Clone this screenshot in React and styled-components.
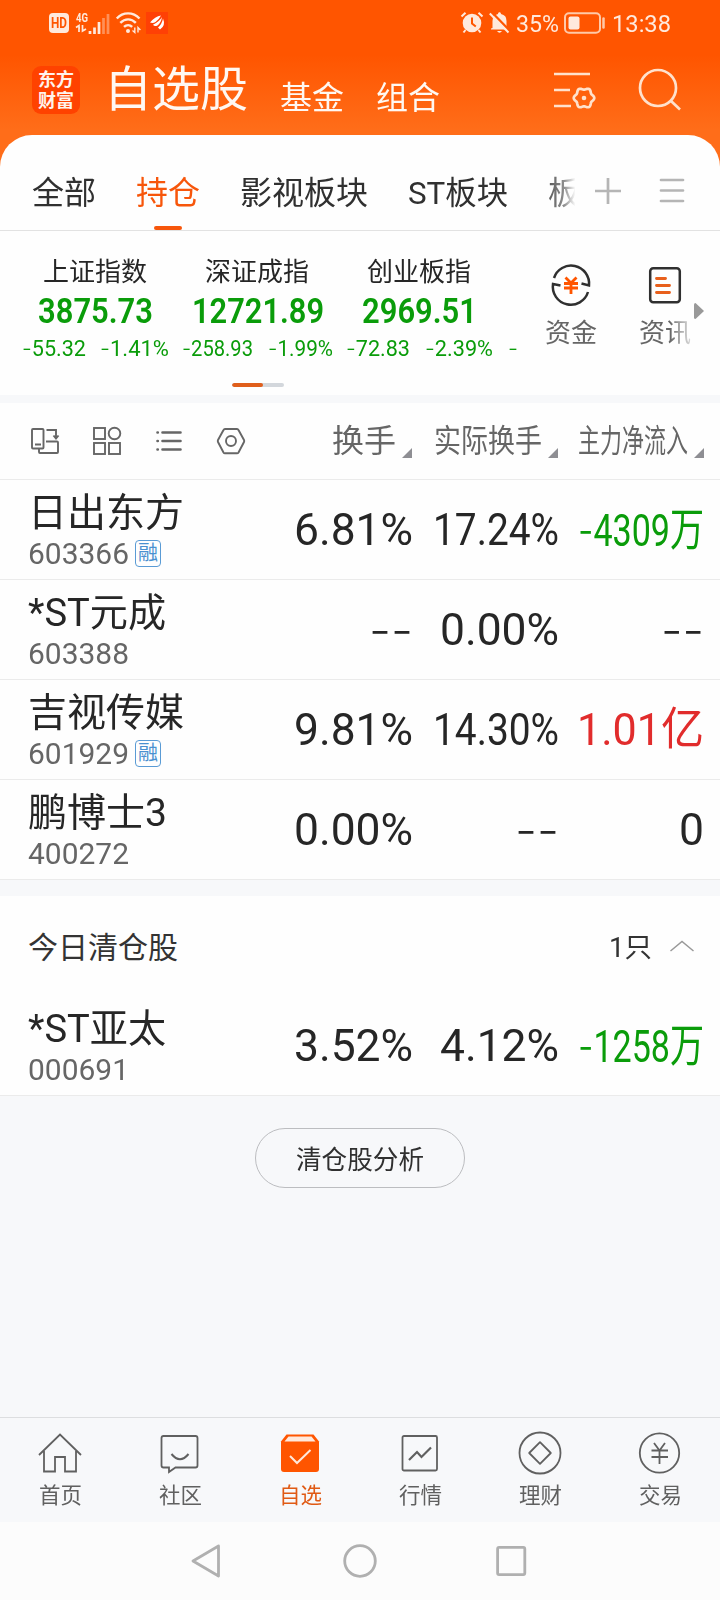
import React, { useLayoutEffect, useRef, useState } from "react";
import styled, { createGlobalStyle } from "styled-components";

const GlobalStyle = createGlobalStyle`
  * { box-sizing: border-box; }
  body {
    margin: 0;
    background: #f7f8fa;
    font-family: Roboto, "Noto Sans CJK SC", sans-serif;
    color: #262626;
  }
`;

const BRAND = "#f7560b";
const GREEN = "#0a9c0a";
const RED = "#e12c2c";

/* Text that is condensed or widened to a fixed measure */
const FitBox = styled.span`
  display: block;
  flex: none;
  width: ${(p) => p.$w}px;
  height: ${(p) => p.$lh}px;
  line-height: ${(p) => p.$lh}px;
  font-size: ${(p) => p.$size}px;
  font-weight: ${(p) => p.$weight || 400};
  color: ${(p) => p.$color || "inherit"};
  white-space: nowrap;
`;
const FitInner = styled.span`
  display: inline-block;
  transform-origin: 0 50%;
`;
const Dash = styled.span`
  font-family: Inter, sans-serif;
  font-weight: 350;
`;

function Fit({ children, w, size, lh, color, weight }) {
  const ref = useRef(null);
  const [scale, setScale] = useState(1);
  useLayoutEffect(() => {
    setScale(w / ref.current.getBoundingClientRect().width);
  }, []);
  return (
    <FitBox $w={w} $size={size} $lh={lh || Math.round(size * 1.2)} $color={color} $weight={weight}>
      <FitInner ref={ref} style={{ transform: `scaleX(${scale})` }}>
        {children.split(/(-+)/).map((part, i) =>
          part.startsWith("-") ? <Dash key={i}>{part}</Dash> : part
        )}
      </FitInner>
    </FitBox>
  );
}

const Screen = styled.div`
  width: 720px;
  height: 1600px;
  display: flex;
  flex-direction: column;
  background: #f7f8fa;
  overflow: hidden;
`;

/* ---------- header ---------- */
const Header = styled.header`
  height: 168px;
  margin-bottom: -33px;
  flex: none;
  background: linear-gradient(#ff5500 0, #ff5500 55px, #ff6d19 130px);
`;
const StatusBar = styled.div`
  height: 46px;
  padding: 0 49px;
  display: flex;
  align-items: center;
  justify-content: space-between;
  color: #ffe9dc;
`;
const StatusGroup = styled.div`
  display: flex;
  align-items: center;
  gap: ${(p) => p.$gap}px;
`;
const StatusText = styled.div`
  padding-top: 1px;
`;
const HdBadge = styled.span`
  width: 20px;
  height: 20px;
  border-radius: 4px;
  background: #ffe9dc;
  color: #ff5500;
  display: flex;
  justify-content: center;
  align-items: center;
`;
const Signal = styled.div`
  width: 33px;
  height: 22px;
  display: flex;
  align-items: flex-end;
  justify-content: space-between;
`;
const Network = styled.div`
  display: flex;
  flex-direction: column;
  height: 22px;
`;
const Glyph = styled.svg`
  display: block;
  flex: none;
  fill: none;
  overflow: visible;
`;
const TitleBar = styled.div`
  height: 89px;
  padding-left: 32px;
  padding-right: 37px;
  display: flex;
  align-items: flex-start;
`;
const AppLogo = styled.div`
  width: 48px;
  height: 48px;
  margin: 20px 24px 0 0;
  padding-top: 3px;
  border-radius: 9px;
  background: #ff4200;
  display: flex;
  flex-direction: column;
  align-items: center;
  color: #fff3ec;
`;
const Title = styled.div`
  margin-top: ${(p) => p.$top}px;
  margin-right: ${(p) => p.$gap}px;
  color: #fff8f2;
`;
const HeaderActions = styled.div`
  margin: 20px 0 0 auto;
  display: flex;
  gap: 42px;
`;

/* ---------- tabs ---------- */
const Panel = styled.section`
  height: 260px;
  flex: none;
  background: #fefefe;
  border-radius: 32px 32px 0 0;
`;
const Tabs = styled.nav`
  height: 96px;
  border-bottom: 1px solid #e2e2e2;
  padding-left: 32px;
  padding-right: 36px;
  display: flex;
  align-items: stretch;
`;
const Tab = styled.div`
  margin-right: ${(p) => (p.$last ? 0 : 40)}px;
  padding-top: 38px;
  display: flex;
  flex-direction: column;
  align-items: center;
  justify-content: space-between;
  color: ${(p) => (p.$active ? BRAND : "#303030")};
  ${(p) => p.$last && `
    mask-image: linear-gradient(90deg, rgba(0,0,0,.8), rgba(0,0,0,.55) 50%, transparent 86%);
  `}
`;
const Underline = styled.i`
  width: 28px;
  height: 4px;
  border-radius: 2px;
  background: ${BRAND};
`;
const TabTools = styled.div`
  margin-left: auto;
  padding-top: 43px;
  display: flex;
  gap: 39px;
`;

/* ---------- indices ---------- */
const IndexArea = styled.div`
  display: flex;
  height: 152px;
  padding-left: 14px;
  padding-top: 22px;
`;
const IndexCell = styled.div`
  width: 162px;
  flex: none;
  display: flex;
  flex-direction: column;
  align-items: center;
`;
const IndexValue = styled.div`
  padding: 1px 0 0 1px;
`;
const Changes = styled.div`
  display: flex;
  margin-top: -2px;
  gap: ${(p) => p.$gap}px;
`;
const NextIndex = styled.div`
  padding-top: 81px;
  margin-left: 8px;
  width: 37px;
  color: ${GREEN};
`;
const Shortcut = styled.div`
  width: 52px;
  margin-right: 42px;
  padding-top: 12px;
  display: flex;
  flex-direction: column;
  align-items: center;
  gap: 11px;
  color: #666;
  ${(p) => p.$fade && "margin-right: 3px; span { mask-image: linear-gradient(90deg, #000 60%, rgba(0,0,0,.5)); }"}
`;
const MoreArrow = styled(Glyph)`
  margin-top: 50px;
`;
const Pager = styled.div`
  width: 52px;
  height: 4px;
  margin-left: 232px;
  border-radius: 2px;
  background: #d3d7dc;
  overflow: hidden;
`;
const PagerThumb = styled.div`
  width: 31px;
  height: 4px;
  border-radius: 2px;
  background: #e05f1c;
`;

/* ---------- table ---------- */
const Table = styled.section`
  margin-top: ${(p) => p.$gap}px;
  flex: none;
  background: #fefefe;
`;
const gridRow = `
  display: grid;
  grid-template-columns: 1fr 146px 146px 144px;
  padding-right: 16px;
  border-bottom: 1px solid #ebebeb;
`;
const HeadRow = styled.div`
  ${gridRow}
  height: 77px;
  padding-left: 31px;
`;
const ViewTools = styled.div`
  display: flex;
  align-items: center;
  gap: 34px;
`;
const HeadCell = styled.div`
  display: flex;
  justify-content: flex-end;
  gap: 6px;
  padding-top: 19px;
  padding-right: ${(p) => p.$pad}px;
  color: #666;
`;
const SortMark = styled.i`
  width: 10px;
  height: 10px;
  margin-top: 26px;
  background: #8e8e93;
  clip-path: polygon(100% 0, 100% 100%, 0 100%);
`;
const Row = styled.div`
  ${gridRow}
  height: 100px;
  padding-left: 28px;
`;
const Stock = styled.div`
  padding-top: 9px;
`;
const CodeLine = styled.div`
  display: flex;
  gap: 6px;
  margin-top: -1px;
  color: #666;
`;
const MarginTag = styled.span`
  width: 26px;
  height: 27px;
  margin-top: 4px;
  border: 1.5px solid #5a9bd5;
  border-radius: 4px;
  display: flex;
  align-items: center;
  justify-content: center;
`;
const Value = styled.div`
  display: flex;
  justify-content: flex-end;
  align-items: center;
  padding-top: 1px;
  padding-right: ${(p) => p.$pad}px;
`;
const SectionHead = styled.div`
  height: 100px;
  padding: 3px 26px 0 28px;
  display: flex;
  align-items: center;
  color: #333;
`;
const Count = styled.div`
  margin-left: auto;
  display: flex;
  align-items: center;
  gap: 18px;
`;
const Chevron = styled(Glyph)`
  margin-top: -4px;
`;
const AnalyzeButton = styled.button`
  width: 210px;
  height: 60px;
  margin: 32px auto 0;
  flex: none;
  padding: 3px 0 0;
  display: flex;
  align-items: center;
  justify-content: center;
  border: 1px solid #bcbdc0;
  border-radius: 30px;
  background: transparent;
  color: #303030;
  font-family: inherit;
`;

/* ---------- bottom ---------- */
const BottomTabs = styled.nav`
  height: 105px;
  margin-top: auto;
  flex: none;
  border-top: 1px solid #dddee0;
  background: #f7f8fa;
  display: grid;
  grid-template-columns: repeat(6, 1fr);
`;
const BottomTab = styled.div`
  padding-top: 14px;
  display: flex;
  flex-direction: column;
  align-items: center;
  gap: 8px;
  color: ${(p) => (p.$active ? "#e05a14" : "#606060")};
`;
const SystemNav = styled.div`
  height: 78px;
  flex: none;
  padding-left: 191px;
  background: #fcfcfc;
  display: flex;
  align-items: center;
  gap: 121px;
`;

const indices = [
  { name: "上证指数", value: "3875.73", vw: 115, a: "-55.32", aw: 64, b: "-1.41%", bw: 69, gap: 14 },
  { name: "深证成指", value: "12721.89", vw: 132, a: "-258.93", aw: 71, b: "-1.99%", bw: 65, gap: 15 },
  { name: "创业板指", value: "2969.51", vw: 115, a: "-72.83", aw: 64, b: "-2.39%", bw: 68, gap: 15 },
];

const holdings = [
  { name: "日出东方", nw: 156, code: "603366", tag: true, cells: [["6.81%", 119], ["17.24%", 126], ["-4309万", 126, GREEN]] },
  { name: "*ST元成", nw: 138, code: "603388", cells: [["--", 44], ["0.00%", 119], ["--", 43]] },
  { name: "吉视传媒", nw: 156, code: "601929", tag: true, cells: [["9.81%", 119], ["14.30%", 126], ["1.01亿", 127, RED]] },
  { name: "鹏博士3", nw: 139, code: "400272", cells: [["0.00%", 119], ["--", 44], ["0", 25]] },
];
const cleared = { name: "*ST亚太", nw: 138, code: "000691", cells: [["3.52%", 119], ["4.12%", 119], ["-1258万", 126, GREEN]] };

function StockRow({ stock }) {
  return (
    <Row>
      <Stock>
        <Fit w={stock.nw} size={38.5} lh={48}>{stock.name}</Fit>
        <CodeLine>
          <Fit w={101} size={30} lh={36}>{stock.code}</Fit>
          {stock.tag && <MarginTag><Fit w={20} size={20} lh={23} color="#4a90d0">融</Fit></MarginTag>}
        </CodeLine>
      </Stock>
      {stock.cells.map(([text, w, color], i) => (
        <Value key={i} $pad={i < 2 ? 1 : 0}><Fit w={w} size={45} lh={54} color={color}>{text}</Fit></Value>
      ))}
    </Row>
  );
}

/* Six-lobed gear outline */
function gearPath(cx, cy, r, depth) {
  const points = [];
  for (let a = 0; a < 360; a += 6) {
    const t = (a * Math.PI) / 180;
    const d = r + depth * Math.cos(6 * t);
    points.push(`${(cx + d * Math.cos(t)).toFixed(2)} ${(cy + d * Math.sin(t)).toFixed(2)}`);
  }
  return `M${points.join("L")}z`;
}

function StatusLine() {
  return (
    <StatusBar>
      <StatusGroup $gap={7}>
        <HdBadge><Fit w={16} size={14} lh={18} weight={700}>HD</Fit></HdBadge>
        <Signal>
          <Network>
            <Fit w={12} size={12} lh={13} weight={700}>4G</Fit>
            <Glyph width="11" height="7" viewBox="0 0 11 7" stroke="currentColor" strokeWidth="1.7">
              <path d="M0 2.5L3 .5V7M6.5 0v6L10 4M3 3h1" />
            </Glyph>
          </Network>
          <Glyph width="22" height="20" viewBox="0 0 22 20" fill="currentColor" stroke="currentColor" strokeWidth="2.7">
            <path d="M2 17v3M6.500 13.500V20M11 8v12" />
            <path d="M15.500 4v16M20 0v20" opacity=".4" />
          </Glyph>
        </Signal>
        <Glyph width="25" height="22" viewBox="0 0 25 22" stroke="currentColor" strokeWidth="2.4">
          <path d="M.8 6.500C7-.3 17-.3 23.500 6.500M4.300 10.800c4.700-4.600 11-4.600 15.500 0M8 14.800c2.400-2.200 5.800-2.200 8.200 0" />
          <circle cx="12" cy="19" r="2" fill="currentColor" stroke="none" />
          <path d="M18.800 15.500v5l-2.300-2M22 20.500v-5l2.400 2.500" strokeWidth="1.4" />
        </Glyph>
        <Glyph width="21" height="22" viewBox="0 0 21 22">
          <rect x="-2" width="22" height="22" fill="#ff4005" />
          <path d="M13 3.500Q7 4.500 2 10.500Q5 11.700 7.500 10Q11 7.500 13 3.500zM14 5Q11.500 9.500 5 12.800Q6.500 15 9.500 13.500Q13 11 14 5zM15 6.500Q14 12 10 15.500Q11 16.500 12 17.500Q18 13.500 15 6.500z" fill="#fff" />
        </Glyph>
      </StatusGroup>
      <StatusGroup $gap={6}>
        <Glyph width="22" height="22" viewBox="0 0 22 22">
          <circle cx="11" cy="11" r="9.3" fill="currentColor" />
          <path d="M.5 4.500L4.500.7M17.500.7l4 3.800M4.500 18l-2 2.500M17.500 18l2 2.500" stroke="currentColor" strokeWidth="2" />
          <path d="M11 5.500v6l3.800 3" stroke="#ff5500" strokeWidth="2" />
        </Glyph>
        <Glyph width="21" height="22" viewBox="0 0 21 22">
          <path d="M3.500 16V9a7 7 0 0 1 5.500-7C9-.2 12-.2 12 2a7 7 0 0 1 5.500 7v5l1.500 2.500v1H2v-1zM8 19h5q-2.500 3.500-5 0z" fill="currentColor" />
          <path d="M2.500 0L21 19" stroke="#ff5500" strokeWidth="2.500" />
          <path d="M.8 1.500L19.500 20.500" stroke="currentColor" strokeWidth="2" />
        </Glyph>
        <StatusText><Fit w={43} size={24} lh={30}>35%</Fit></StatusText>
        <Glyph width="41" height="22" viewBox="0 0 41 22">
          <rect x="0" y="1.200" width="35" height="19.600" rx="4" stroke="#ffc9a8" strokeWidth="2" />
          <rect x="3.500" y="4.500" width="11" height="13" rx="2" fill="currentColor" />
          <path d="M38.500 6.500v9" stroke="#ffc9a8" strokeWidth="2.500" strokeLinecap="round" />
        </Glyph>
        <StatusText><Fit w={59} size={24.5} lh={30}>13:38</Fit></StatusText>
      </StatusGroup>
    </StatusBar>
  );
}

const bottomItems = [
  ["首页", <path d="M1.500 23L22.500 2.500 43.500 23M6.500 19v20.500H17.500V25h10v14.500H38.500V19" />],
  ["社区", <>
    <path d="M6 4h32q2 0 2 2v27.500q0 2-2 2H18l-6.500 4.500v-4.500H6q-2 0-2-2V6q0-2 2-2z" />
    <path d="M14 22q8.500 10.500 17 0" strokeWidth="2" />
  </>],
  ["自选", <>
    <path d="M3.500 9.500L9 2.500h27l5.500 7V37q0 3-3 3h-32q-3 0-3-3z" fill="#ff5500" stroke="none" />
    <path d="M7 9.500L11 4.500h23l4 5z" fill="#ffe9dc" stroke="none" />
    <path d="M12.500 24l7 7L33 18" stroke="#ffe9dc" strokeWidth="2" />
  </>],
  ["行情", <>
    <rect x="5" y="4" width="34.500" height="34.500" rx="1.500" />
    <path d="M11.500 28l8-8 4.500 5L33.500 15.500" strokeWidth="2.200" />
  </>],
  ["理财", <>
    <circle cx="22.500" cy="21" r="20.500" />
    <path d="M22.500 10.200L33.300 21 22.500 31.800 11.700 21z" strokeLinejoin="round" />
  </>],
  ["交易", <>
    <circle cx="22" cy="21" r="19.700" />
    <path d="M16.500 11L22 18.500 27.500 11M14 18.500h16.500M14 25h16.500M22 18.500V32" />
  </>],
];

export default function App() {
  return (
    <>
      <GlobalStyle />
      <Screen>
        <Header>
          <StatusLine />
          <TitleBar>
            <AppLogo>
              <Fit w={36} size={18} lh={21} weight={700}>东方</Fit>
              <Fit w={36} size={18} lh={21} weight={700}>财富</Fit>
            </AppLogo>
            <Title $top={16} $gap={32}><Fit w={144} size={48} lh={56}>自选股</Fit></Title>
            <Title $top={32} $gap={32}><Fit w={64} size={32} lh={40}>基金</Fit></Title>
            <Title $top={32} $gap={0}><Fit w={64} size={32} lh={40}>组合</Fit></Title>
            <HeaderActions>
              <Glyph width="43" height="44" viewBox="0 0 43 44" stroke="#ffe1cc" strokeWidth="2.700">
                <path d="M0 8h36M0 24h16M0 40h17" />
                <path d={gearPath(30, 32, 9.3, 1)} strokeLinejoin="round" />
                <circle cx="30" cy="32" r="2.300" fill="#ffe1cc" stroke="none" />
              </Glyph>
              <Glyph width="44" height="44" viewBox="0 0 44 44" stroke="#ffe1cc" strokeWidth="2.700">
                <circle cx="19" cy="22" r="18" />
                <path d="M31.500 34.500L41 43.500" />
              </Glyph>
            </HeaderActions>
          </TitleBar>
        </Header>

        <Panel>
          <Tabs>
            <Tab><Fit w={64} size={32} lh={40}>全部</Fit></Tab>
            <Tab $active><Fit w={64} size={32} lh={40}>持仓</Fit><Underline /></Tab>
            <Tab><Fit w={128} size={32} lh={40}>影视板块</Fit></Tab>
            <Tab><Fit w={100} size={32} lh={40}>ST板块</Fit></Tab>
            <Tab $last><Fit w={32} size={32} lh={40}>板</Fit></Tab>
            <TabTools>
              <Glyph width="26" height="26" viewBox="0 0 26 26" stroke="#b5b5b5" strokeWidth="2.700"><path d="M0 13h26M13 0v26" /></Glyph>
              <Glyph width="24" height="26" viewBox="0 0 24 26" stroke="#b5b5b5" strokeWidth="2.700" strokeLinecap="round"><path d="M1 2h22M1 12.500h22M1 23h22" /></Glyph>
            </TabTools>
          </Tabs>
          <IndexArea>
            {indices.map((x) => (
              <IndexCell key={x.name}>
                <Fit w={104} size={26} lh={38}>{x.name}</Fit>
                <IndexValue><Fit w={x.vw} size={35} lh={40} weight={600} color={GREEN}>{x.value}</Fit></IndexValue>
                <Changes $gap={x.gap}>
                  <Fit w={x.aw} size={22} lh={36} color={GREEN}>{x.a}</Fit>
                  <Fit w={x.bw} size={22} lh={36} color={GREEN}>{x.b}</Fit>
                </Changes>
              </IndexCell>
            ))}
            <NextIndex><Fit w={10} size={22} lh={28}>-</Fit></NextIndex>
            <Shortcut>
              <Glyph width="40" height="40" viewBox="0 0 40 40" stroke="#303030" strokeWidth="2.500">
                <path d="M3 13A18 18 0 0 1 38 20.500L30.500 18.500M37 27A18 18 0 0 1 2 19L9.500 20.500" />
                <path d="M14.500 12.500L20 18l5.500-5.500M13 18.500h14M13 23h14M20 18v11" stroke="#ff5500" strokeWidth="2.800" />
              </Glyph>
              <Fit w={52} size={26} lh={34}>资金</Fit>
            </Shortcut>
            <Shortcut $fade>
              <Glyph width="32" height="40" viewBox="0 0 32 40" stroke="#303030" strokeWidth="2.500">
                <rect x="1.200" y="3.200" width="29.600" height="34" rx="3" />
                <path d="M7.500 13.500h9M7.500 20.500h13M7.500 27.500h13" stroke="#e8601c" strokeWidth="2.900" strokeLinecap="round" />
              </Glyph>
              <Fit w={52} size={26} lh={34}>资讯</Fit>
            </Shortcut>
            <MoreArrow width="10" height="16" viewBox="0 0 10 16"><path d="M0 1.500Q0 0 1.500 0L10 8 1.500 16Q0 16 0 14.500z" fill="#999" /></MoreArrow>
          </IndexArea>
          <Pager><PagerThumb /></Pager>
        </Panel>

        <Table $gap={8}>
          <HeadRow>
            <ViewTools>
              <Glyph width="28" height="28" viewBox="0 0 28 28" stroke="#666" strokeWidth="1.900">
                <rect x="1" y="2" width="11.500" height="19.500" rx="1" />
                <path d="M4 17.500h6M15.500 3H25v7.500M22.500 8.500l2.500 3 2.500-3M15 14.500h11q1 0 1 1V25q0 1-1 1H9q-1 0-1-1v-3" />
              </Glyph>
              <Glyph width="28" height="28" viewBox="0 0 28 28" stroke="#666" strokeWidth="1.900">
                <rect x="1" y="1" width="11" height="11" /><circle cx="21.500" cy="6.500" r="5.800" />
                <rect x="1" y="16" width="11" height="11" /><rect x="16" y="16" width="11" height="11" />
              </Glyph>
              <Glyph width="28" height="28" viewBox="0 0 28 28" stroke="#666" strokeWidth="2.600" strokeLinecap="round">
                <path d="M7.500 5.500h18M7.500 14h18M7.500 22.500h18M2.500 5.500h.3M2.500 14h.3M2.500 22.500h.3" />
              </Glyph>
              <Glyph width="28" height="28" viewBox="0 0 28 28" stroke="#666" strokeWidth="1.900" strokeLinejoin="round">
                <path d="M8 2h12q1 0 1.500 1L27 13q.5 1 0 2l-5.500 10.500q-.5.800-1.500.800H8q-1 0-1.500-.8L1 15q-.5-1 0-2L6.500 3Q7 2 8 2z" />
                <circle cx="14" cy="14" r="5" />
              </Glyph>
            </ViewTools>
            <HeadCell $pad={2}><Fit w={64} size={32} lh={38}>换手</Fit><SortMark /></HeadCell>
            <HeadCell $pad={2}><Fit w={108} size={32} lh={38}>实际换手</Fit><SortMark /></HeadCell>
            <HeadCell $pad={0}><Fit w={110} size={32} lh={38}>主力净流入</Fit><SortMark /></HeadCell>
          </HeadRow>
          {holdings.map((s) => <StockRow key={s.code} stock={s} />)}
        </Table>

        <Table $gap={16}>
          <SectionHead>
            <Fit w={150} size={30} lh={40}>今日清仓股</Fit>
            <Count>
              <Fit w={43} size={27} lh={40}>1只</Fit>
              <Chevron width="24" height="10" viewBox="0 0 24 10" stroke="#999" strokeWidth="1.500"><path d="M.5 10L12 .5 23.500 10" /></Chevron>
            </Count>
          </SectionHead>
          <StockRow stock={cleared} />
        </Table>

        <AnalyzeButton><Fit w={128} size={25.6} lh={32}>清仓股分析</Fit></AnalyzeButton>

        <BottomTabs>
          {bottomItems.map(([label, art], i) => (
            <BottomTab key={label} $active={i === 2}>
              <Glyph width="45" height="42" viewBox="0.5 0 45 42" stroke="#606060" strokeWidth="1.800">{art}</Glyph>
              <Fit w={43} size={21.5} lh={28}>{label}</Fit>
            </BottomTab>
          ))}
        </BottomTabs>
        <SystemNav>
          <Glyph width="29" height="34" viewBox="0 0 29 34" stroke="#b0b0b0" strokeWidth="2.800" strokeLinejoin="round"><path d="M27.500 2L2 17l25.500 15z" /></Glyph>
          <Glyph width="34" height="34" viewBox="0 0 34 34" stroke="#b0b0b0" strokeWidth="2.800"><circle cx="19" cy="17" r="15.300" /></Glyph>
          <Glyph width="30" height="30" viewBox="0 0 30 30" stroke="#b0b0b0" strokeWidth="2.800"><rect x="1.600" y="1.400" width="27.200" height="27.200" rx="1.500" /></Glyph>
        </SystemNav>
      </Screen>
    </>
  );
}
